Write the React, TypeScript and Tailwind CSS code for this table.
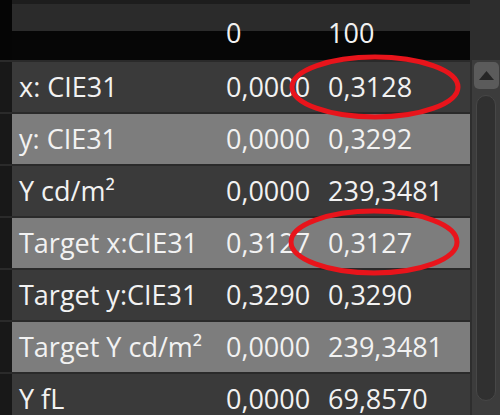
import React from "react";

const rows: { label: React.ReactNode; v0: string; v100: string; light: boolean }[] = [
  { label: "x: CIE31", v0: "0,0000", v100: "0,3128", light: false },
  { label: "y: CIE31", v0: "0,0000", v100: "0,3292", light: true },
  { label: <>Y cd/m²</>, v0: "0,0000", v100: "239,3481", light: false },
  { label: "Target x:CIE31", v0: "0,3127", v100: "0,3127", light: true },
  { label: "Target y:CIE31", v0: "0,3290", v100: "0,3290", light: false },
  { label: <>Target Y cd/m²</>, v0: "0,0000", v100: "239,3481", light: true },
  { label: "Y fL", v0: "0,0000", v100: "69,8570", light: false },
];

export default function App() {
  return (
    <div className="relative w-[500px] h-[415px] overflow-hidden bg-[#3b3b3b] flex text-[#f2f2f2] font-['Open_Sans',sans-serif] text-[27px]">
      {/* Grid */}
      <div className="w-[470px] flex flex-col">
        {/* Header */}
        <div className="h-[60px] grid grid-cols-[12px_214px_102px_142px] shrink-0">
          <div className="bg-[#050505]" />
          <div className="col-span-3 grid grid-cols-[214px_102px_142px] items-center pt-[6px] bg-[linear-gradient(to_bottom,#1d1d1d_0px,#1d1d1d_4px,#2b2b2b_4px,#2b2b2b_31px,#060606_31px)]">
            <span />
            <span>0</span>
            <span>100</span>
          </div>
        </div>

        {/* Rows */}
        {rows.map((r, i) => (
          <div
            key={i}
            className="h-[52px] shrink-0 grid grid-cols-[12px_214px_102px_142px] border-t-2 border-[#2a2a2a]"
          >
            <div className="bg-[#181818]" />
            <div
              className={`col-span-3 grid grid-cols-[214px_102px_142px] items-center whitespace-nowrap ${
                r.light ? "bg-[#7d7d7d]" : "bg-[#3a3a3a]"
              }`}
            >
              <span className="pl-[7px]">{r.label}</span>
              <span>{r.v0}</span>
              <span>{r.v100}</span>
            </div>
          </div>
        ))}
      </div>

      {/* Scrollbar */}
      <div className="w-[30px] flex flex-col">
        <div className="h-[60px] bg-[#2d2d2d] shrink-0" />
        <div className="flex-1 flex flex-col items-center border-l-2 border-[#2e2e2e] bg-[#3c3c3c] pt-[2px]">
          <div className="w-[25px] h-[27px] rounded-[5px] bg-[#5b5b5b] flex items-center justify-center">
            <svg width="15" height="9" viewBox="0 0 15 9">
              <polygon points="7.5,0 15,9 0,9" fill="#262626" />
            </svg>
          </div>
          <div className="mt-[6px] w-[20px] h-[306px] rounded-full bg-[#303030] border border-[#474747]" />
        </div>
      </div>

      {/* Annotation */}
      <svg className="absolute left-0 top-0 pointer-events-none" width="500" height="415">
        <ellipse cx="375" cy="87" rx="83" ry="30" fill="none" stroke="#e8141b" strokeWidth="5" />
        <ellipse cx="374" cy="242" rx="83" ry="31" fill="none" stroke="#e8141b" strokeWidth="5" />
      </svg>
    </div>
  );
}
